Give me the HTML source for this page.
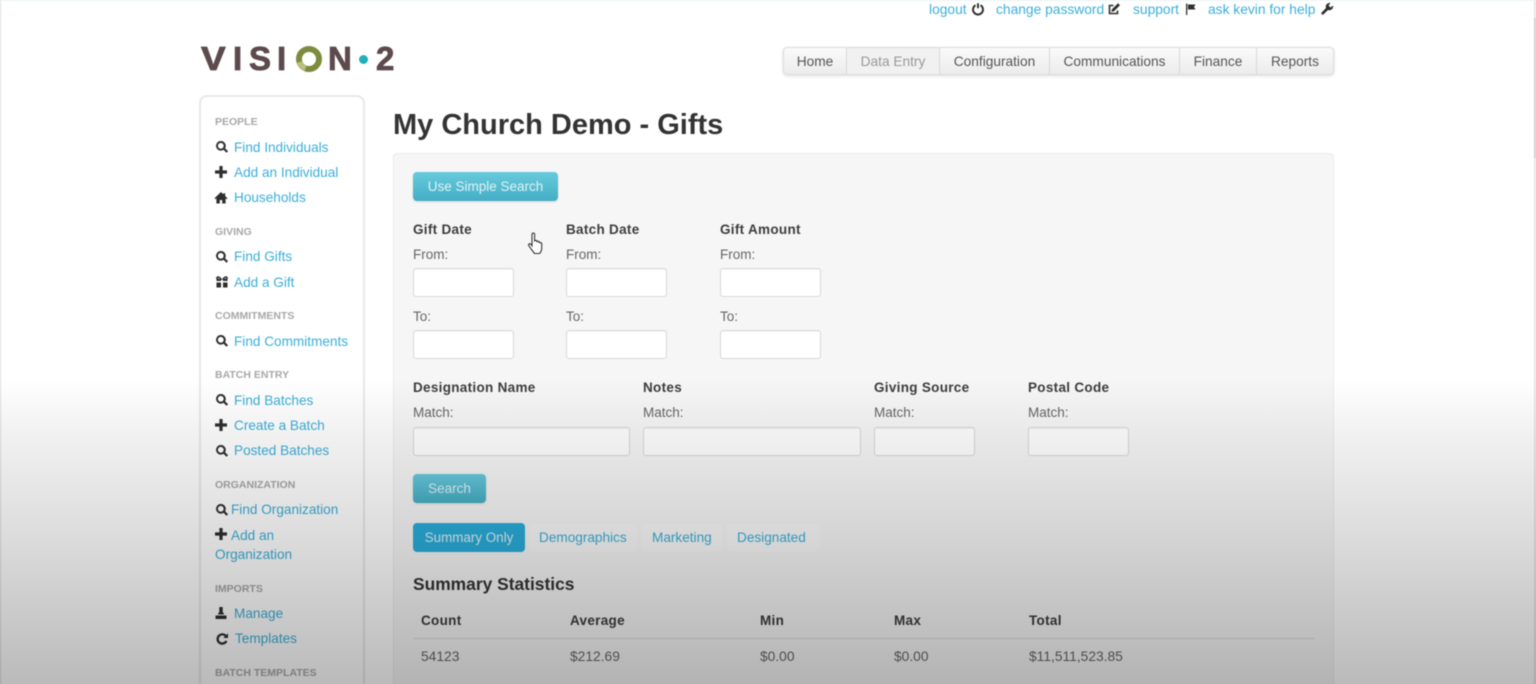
<!DOCTYPE html>
<html><head><meta charset="utf-8"><title>My Church Demo - Gifts</title>
<style>
html,body{margin:0;padding:0;width:1536px;height:684px;overflow:hidden;background:#fff}
body{font-family:"Liberation Sans",Arial,sans-serif;font-size:13.6px;color:#444;position:relative}
#p{position:absolute;left:0;top:0;width:1536px;height:684px;filter:blur(.6px);overflow:hidden}
.a{position:absolute;white-space:nowrap;line-height:20px}
.l{color:#3bafd9}
.h{font-size:10.5px;font-weight:bold;color:#a8a8a8}
.b{font-weight:bold;font-size:13.5px;color:#3c3c3c;letter-spacing:.3px}
.s{color:#666;font-size:13.5px}
.n{color:#666;font-size:13.8px}
.i{position:absolute;box-sizing:border-box;background:#fff;border:1px solid #d8d8d8;border-radius:3px;box-shadow:inset 0 1px 1px rgba(0,0,0,.05);height:29px}
.ic{position:absolute;width:14px;height:14px;fill:#2e2e2e}
.nav{position:absolute;left:783px;top:47px;width:551px;height:28px;box-sizing:border-box;border:1px solid #dcdcdc;border-radius:4px;background:linear-gradient(#fafafa,#ececec);box-shadow:0 1px 3px rgba(0,0,0,.14)}
.nav span{position:absolute;top:0;height:26px;line-height:27px;text-align:center;color:#555;font-size:13.700px;border-right:1px solid #d8d8d8;box-sizing:border-box}
.btn{position:absolute;height:29px;border-radius:4px;background:linear-gradient(#68cadd,#44aec4);color:#dff2f6;text-align:center;line-height:30px;font-size:13.500px;box-shadow:0 1px 2px rgba(0,0,0,.12)}
.lg{position:absolute;line-height:36px;top:41px;font-size:33px;font-weight:bold;color:#5c4a4c;-webkit-text-stroke:.8px #5c4a4c}
.chip{position:absolute;top:524px;height:27px;border-radius:4px;background:#f9f9f9}
#ov{position:absolute;left:0;top:0;width:1536px;height:684px;background:linear-gradient(rgba(0,0,0,0) 378px,rgba(0,0,0,.05) 430px,rgba(0,0,0,.14) 540px,rgba(0,0,0,.27) 684px);pointer-events:none}
</style></head><body>
<svg width="0" height="0" style="position:absolute">
<symbol id="q" viewBox="0 0 14 14"><path d="M5.800 1a4.800 4.800 0 1 0 2.700 8.800l3 3 1.600-1.600-3-3A4.800 4.800 0 0 0 5.800 1zm0 1.900a2.900 2.900 0 1 1 0 5.800 2.900 2.900 0 0 1 0-5.800z"/></symbol>
<symbol id="pl" viewBox="0 0 14 14"><path d="M5.400 1h3.200v4.400h4.400v3.200H8.600V13H5.400V8.600H1V5.400h4.400z"/></symbol>
<symbol id="ho" viewBox="0 0 14 14"><path d="M7 1 .5 7.200l.9 1 1-.9v5.200h3.400V9h2.400v3.500h3.400V7.300l1 .9.900-1-2.300-2.200V2.200H9.500v1.200z"/></symbol>
<symbol id="gi" viewBox="0 0 14 14"><path d="M1.500 4.300C.5 2.300 2 1 3.500 1.300c1.300.3 2.500 1.500 3.500 3 1-1.500 2.200-2.700 3.500-3 1.500-.3 3 1 2 3v1.700H8V4.800H6V6H1.500zM3.300 2.800c-.6 0-.5 1 .2 1h1.300c-.4-.5-1-1-1.500-1zm7.400 0c-.5 0-1.100.5-1.500 1h1.300c.7 0 .8-1 .2-1zM1.500 7.500H6v5H1.500zM8 7.500h4.500v5H8z"/></symbol>
<symbol id="dl" viewBox="0 0 14 14"><path d="M5.300 1h3.400v4.800c0 1 1.300 1.200 1.300 2.700H4c0-1.500 1.300-1.700 1.300-2.700zM1.500 9.500h11V13h-11z"/></symbol>
<symbol id="re" viewBox="0 0 14 14"><path d="M7.200 1.200a5.800 5.800 0 1 0 5.300 8.200l-2.100-.9A3.500 3.500 0 1 1 9.800 4.500L8.300 6H13V1.300l-1.600 1.600a5.800 5.800 0 0 0-4.200-1.700z"/></symbol>
</svg>
<div id="p">
<div style="position:absolute;left:0;top:0;width:1536px;height:1px;background:#eaf1f6"></div>
<div style="position:absolute;left:0;top:0;width:1px;height:684px;background:#ddd"></div>
<div style="position:absolute;left:1534px;top:0;width:2px;height:684px;background:#e6e6e6"></div>
<div style="position:absolute;left:1534px;top:18px;width:2px;height:140px;background:#cfcfcf"></div>

<span class="a l" style="left:929px;top:0;font-size:13.800px">logout</span>
<svg class="ic" style="left:971px;top:2px" viewBox="0 0 14 14"><path fill="none" stroke="#2e2e2e" stroke-width="1.900" d="M4.500 3.200a5 5 0 1 0 5 0M7 1.200v5"/></svg>
<span class="a l" style="left:996px;top:0;font-size:13.800px">change password</span>
<svg class="ic" style="left:1107px;top:2px" viewBox="0 0 14 14"><path fill="none" stroke="#2e2e2e" stroke-width="1.600" d="M10.500 8.500v3H2.500V3.500h4"/><path d="M11 1.200l2 2-6 6-2.700.7.700-2.700z"/></svg>
<span class="a l" style="left:1133px;top:0;font-size:13.800px">support</span>
<svg class="ic" style="left:1184px;top:2px" viewBox="0 0 14 14"><path d="M2 1.500h1.300V13H2zM4 2.500h7.500L10 5l1.500 2.500H4z"/></svg>
<span class="a l" style="left:1208px;top:0;font-size:13.800px">ask kevin for help</span>
<svg class="ic" style="left:1320px;top:2px" viewBox="0 0 14 14"><path d="M13 3.500l-2.500 2-2-2L10.600 1A3.800 3.800 0 0 0 6 6L1 11.200 2.800 13 8 8a3.800 3.800 0 0 0 5-4.500z"/></svg>

<!-- logo -->
<div class="lg" style="left:200.500px;transform:scaleX(1.12);transform-origin:0 50%">V</div>
<div class="lg" style="left:233px">I</div>
<div class="lg" style="left:249px">S</div>
<div class="lg" style="left:277px">I</div>
<svg style="position:absolute;left:294px;top:45px" width="30" height="28" viewBox="0 0 30 28"><circle cx="15" cy="14" r="10" fill="none" stroke="#7d8b3f" stroke-width="6"/><path d="M5.500 17a10 10 0 0 0 6 6.500" fill="none" stroke="#b9bd7e" stroke-width="6"/></svg>
<div class="lg" style="left:328px">N</div>
<div style="position:absolute;left:359px;top:55px;width:9px;height:9px;border-radius:50%;background:#1fb0b7"></div>
<div class="lg" style="left:376px">2</div>

<div class="nav">
<span style="left:0;width:63px">Home</span>
<span style="left:63px;width:93px;color:#999;background:#f1f1f1">Data Entry</span>
<span style="left:156px;width:110px">Configuration</span>
<span style="left:266px;width:130px">Communications</span>
<span style="left:396px;width:77px">Finance</span>
<span style="left:473px;width:76px;border-right:0">Reports</span>
</div>

<div style="position:absolute;left:199px;top:95px;width:166px;height:620px;box-sizing:border-box;border:2px solid #e8e8e8;border-radius:8px;background:#fff"></div>
<span class="a h" style="left:215px;top:112px">PEOPLE</span>
<svg class="ic" style="left:215px;top:139.500px"><use href="#q"/></svg><span class="a l" style="left:234px;top:138px">Find Individuals</span>
<svg class="ic" style="left:214px;top:165px"><use href="#pl"/></svg><span class="a l" style="left:234px;top:163px">Add an Individual</span>
<svg class="ic" style="left:214px;top:190.500px"><use href="#ho"/></svg><span class="a l" style="left:234px;top:188px">Households</span>
<span class="a h" style="left:215px;top:222px">GIVING</span>
<svg class="ic" style="left:215px;top:249.500px"><use href="#q"/></svg><span class="a l" style="left:234px;top:247px">Find Gifts</span>
<svg class="ic" style="left:215px;top:274.500px"><use href="#gi"/></svg><span class="a l" style="left:234px;top:273px">Add a Gift</span>
<span class="a h" style="left:215px;top:306px">COMMITMENTS</span>
<svg class="ic" style="left:215px;top:333.500px"><use href="#q"/></svg><span class="a l" style="left:234px;top:332px">Find Commitments</span>
<span class="a h" style="left:215px;top:365px">BATCH ENTRY</span>
<svg class="ic" style="left:215px;top:392.500px"><use href="#q"/></svg><span class="a l" style="left:234px;top:391px">Find Batches</span>
<svg class="ic" style="left:214px;top:418px"><use href="#pl"/></svg><span class="a l" style="left:234px;top:416px">Create a Batch</span>
<svg class="ic" style="left:215px;top:443.500px"><use href="#q"/></svg><span class="a l" style="left:234px;top:441px">Posted Batches</span>
<span class="a h" style="left:215px;top:475px">ORGANIZATION</span>
<svg class="ic" style="left:215px;top:502.500px"><use href="#q"/></svg><span class="a l" style="left:231px;top:500px">Find Organization</span>
<svg class="ic" style="left:214px;top:527px"><use href="#pl"/></svg><span class="a l" style="left:231px;top:526px">Add an</span>
<span class="a l" style="left:215px;top:545px">Organization</span>
<span class="a h" style="left:215px;top:579px">IMPORTS</span>
<svg class="ic" style="left:214px;top:606px"><use href="#dl"/></svg><span class="a l" style="left:234px;top:604px">Manage</span>
<svg class="ic" style="left:215px;top:631.500px"><use href="#re"/></svg><span class="a l" style="left:235px;top:629px">Templates</span>
<span class="a h" style="left:215px;top:663px">BATCH TEMPLATES</span>

<div class="a" style="left:393px;top:107px;line-height:36px;font-size:29px;font-weight:bold;color:#333">My Church Demo - Gifts</div>

<div style="position:absolute;left:393px;top:153px;width:941px;height:560px;box-sizing:border-box;background:#f6f6f6;border:1px solid #ebebeb;border-radius:4px"></div>
<div class="btn" style="left:413px;top:172px;width:145px">Use Simple Search</div>

<span class="a b" style="left:413px;top:220px">Gift Date</span>
<span class="a b" style="left:566px;top:220px">Batch Date</span>
<span class="a b" style="left:720px;top:220px">Gift Amount</span>
<span class="a s" style="left:413px;top:245px">From:</span>
<span class="a s" style="left:566px;top:245px">From:</span>
<span class="a s" style="left:720px;top:245px">From:</span>
<div class="i" style="left:413px;top:268px;width:101px"></div>
<div class="i" style="left:566px;top:268px;width:101px"></div>
<div class="i" style="left:720px;top:268px;width:101px"></div>
<span class="a s" style="left:413px;top:307px">To:</span>
<span class="a s" style="left:566px;top:307px">To:</span>
<span class="a s" style="left:720px;top:307px">To:</span>
<div class="i" style="left:413px;top:330px;width:101px"></div>
<div class="i" style="left:566px;top:330px;width:101px"></div>
<div class="i" style="left:720px;top:330px;width:101px"></div>

<svg style="position:absolute;left:525px;top:231px" width="22" height="26" viewBox="0 0 22 26"><path d="M7 3.500c0-2 2.600-2 2.600 0v7c0-1.400 2.400-1.400 2.400 0v.8c0-1.300 2.400-1.300 2.400.2v.8c0-1.200 2.300-1 2.300.6v4.600c0 2.700-1.300 4-2 5H9.500c-1-1.500-4.500-6-5.500-7.500-1.200-1.800.8-3 2-1.600l1 1.300z" fill="#fff" stroke="#333" stroke-width="1.100"/></svg>

<span class="a b" style="left:413px;top:378px">Designation Name</span>
<span class="a b" style="left:643px;top:378px">Notes</span>
<span class="a b" style="left:874px;top:378px">Giving Source</span>
<span class="a b" style="left:1028px;top:378px">Postal Code</span>
<span class="a s" style="left:413px;top:403px">Match:</span>
<span class="a s" style="left:643px;top:403px">Match:</span>
<span class="a s" style="left:874px;top:403px">Match:</span>
<span class="a s" style="left:1028px;top:403px">Match:</span>
<div class="i" style="left:413px;top:427px;width:217px"></div>
<div class="i" style="left:643px;top:427px;width:218px"></div>
<div class="i" style="left:874px;top:427px;width:101px"></div>
<div class="i" style="left:1028px;top:427px;width:101px"></div>

<div class="btn" style="left:413px;top:474px;width:73px">Search</div>

<div style="position:absolute;left:413px;top:523px;width:112px;height:29px;border-radius:4px;background:#2aacd9;color:#dff2f9;text-align:center;line-height:30px;font-size:13.400px">Summary Only</div>
<div class="chip" style="left:529px;width:108px"></div>
<div class="chip" style="left:641px;width:81px"></div>
<div class="chip" style="left:727px;width:93px"></div>
<span class="a l" style="left:539px;top:528px">Demographics</span>
<span class="a l" style="left:652px;top:528px">Marketing</span>
<span class="a l" style="left:737px;top:528px">Designated</span>

<div class="a" style="left:413px;top:574px;font-size:17.400px;font-weight:bold;color:#333">Summary Statistics</div>
<span class="a b" style="left:421px;top:611px">Count</span>
<span class="a b" style="left:570px;top:611px">Average</span>
<span class="a b" style="left:760px;top:611px">Min</span>
<span class="a b" style="left:894px;top:611px">Max</span>
<span class="a b" style="left:1029px;top:611px">Total</span>
<div style="position:absolute;left:413px;top:638px;width:902px;height:1px;background:#dcdcdc"></div>
<span class="a n" style="left:421px;top:647px">54123</span>
<span class="a n" style="left:570px;top:647px">$212.69</span>
<span class="a n" style="left:760px;top:647px">$0.00</span>
<span class="a n" style="left:894px;top:647px">$0.00</span>
<span class="a n" style="left:1029px;top:647px">$11,511,523.85</span>
</div>
<div id="ov"></div>
</body></html>
